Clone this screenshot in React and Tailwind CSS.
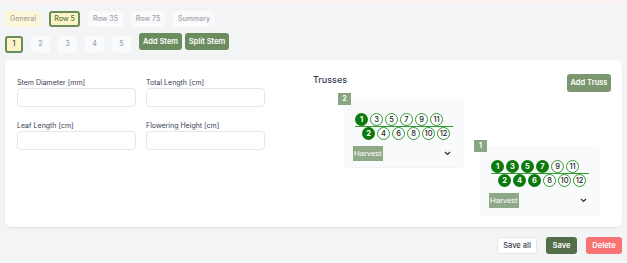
import React from "react";

const tabs = [
  { name: "General", w: "w-[36px]" },
  { name: "Row 5", w: "w-[31px]" },
  { name: "Row 35", w: "w-[35px]" },
  { name: "Row 75", w: "w-[34px]" },
  { name: "Summary", w: "w-[42px]" },
];
const stems = [1, 2, 3, 4, 5];

function Circle({ n, filled }) {
  return (
    <div
      className={
        "w-[13px] h-[13px] rounded-full flex items-center justify-center text-[7.5px] leading-none " +
        (filled
          ? "bg-[#0b7a0b] text-white font-bold"
          : "bg-white border border-[#2f9a2f] text-[#222] font-medium")
      }
    >
      {n}
    </div>
  );
}

function Truss({ id, filled }) {
  const top = [1, 3, 5, 7, 9, 11];
  const bottom = [2, 4, 6, 8, 10, 12];
  return (
    <div className="flex flex-col">
      <div className="relative z-10 w-[13px] h-[12px] bg-[#8aa582] text-white text-[7px] font-bold flex items-center justify-center">
        {id}
      </div>
      <div className="ml-[6px] -mt-[6px] w-[120px] h-[68px] bg-[#f9fafb] rounded-[5px] shadow-[0_1px_2px_rgba(0,0,0,0.06)] pt-[14px] pl-[11px]">
        <div className="flex gap-[2px]">
          {top.map((n) => (
            <Circle key={n} n={n} filled={filled.includes(n)} />
          ))}
        </div>
        <div className="w-[98px] h-px bg-[#2f9a2f]" />
        <div className="flex gap-[2px] ml-[7px]">
          {bottom.map((n) => (
            <Circle key={n} n={n} filled={filled.includes(n)} />
          ))}
        </div>
        <div className="mt-[6px] -ml-[2px] w-[100px] flex items-center justify-between">
          <span className="h-[15px] px-[1px] bg-[#8fa988] text-white text-[8px] flex items-center font-['Liberation_Sans',sans-serif]">
            Harvest
          </span>
          <svg width="7" height="5" viewBox="0 0 7 5" className="mr-[2px]">
            <path d="M1 1l2.5 2.5L6 1" fill="none" stroke="#333" strokeWidth="1.2" />
          </svg>
        </div>
      </div>
    </div>
  );
}

function Field({ label, unit }) {
  return (
    <div className="flex flex-col">
      <label className="text-[7px] leading-[10px] text-[#374151] h-[10px]">
        {label} <span>{unit}</span>
      </label>
      <input className="w-[119px] h-[19px] bg-white border border-[#e5e7eb] rounded-[4px]" />
    </div>
  );
}

export default function App() {
  return (
    <div className="min-h-screen bg-[#f3f4f6] px-[5px] font-['Inter',sans-serif]">
      <div className="h-[3px] bg-[#fdf0f0]" />

      {/* row tabs */}
      <div className="mt-[8px] flex gap-[8px]">
        {tabs.map((t, i) => (
          <div
            key={t.name}
            className={
              "h-[16px] rounded-[3px] flex items-center justify-center text-[7px] font-medium " +
              t.w +
              " " +
              (i === 0
                ? "bg-[#fdf7d9] text-[#a3a39b]"
                : i === 1
                ? "bg-[#fdf3c5] border-2 border-[#6b8a5e] text-[#55744b]"
                : "bg-[#fafafa] text-[#9ca3af]")
            }
          >
            {t.name}
          </div>
        ))}
      </div>

      {/* stems */}
      <div className="mt-[6px] flex items-start">
        <div className="flex gap-[8px] mt-[3px]">
          {stems.map((s) => (
            <div
              key={s}
              className={
                "h-[17px] rounded-[3px] flex items-center justify-center text-[7px] font-medium " +
                (s === 1
                  ? "w-[18px] bg-[#fdf3c5] border-2 border-[#6b8a5e] text-[#3f3f3f]"
                  : "w-[19px] bg-[#f9fafb] text-[#9ca3af]")
              }
            >
              {s}
            </div>
          ))}
        </div>
        <button className="ml-[8px] h-[17px] w-[43px] rounded-[3px] bg-[#6a8c5f] text-white text-[7.5px] font-semibold">
          Add Stem
        </button>
        <button className="ml-[3px] h-[17px] w-[44px] rounded-[3px] bg-[#6a8c5f] text-white text-[7.5px] font-semibold">
          Split Stem
        </button>
      </div>

      {/* main card */}
      <div className="mt-[7px] h-[167px] bg-white rounded-[6px] shadow-[0_1px_2px_rgba(0,0,0,0.08)] flex pl-[12px] pr-[11px] pt-[14px]">
        <div className="pt-[4px] grid grid-cols-[119px_119px] gap-x-[10px] gap-y-[14px] content-start">
          <Field label="Stem Diameter" unit="[mm]" />
          <Field label="Total Length" unit="[cm]" />
          <Field label="Leaf Length" unit="[cm]" />
          <Field label="Flowering Height" unit="[cm]" />
        </div>

        <div className="ml-[48px] flex-1 flex flex-col">
          <div className="flex justify-between items-start">
            <h2 className="mt-[1px] text-[9px] leading-[10px] font-medium text-[#374151]">Trusses</h2>
            <button className="h-[18px] w-[44px] rounded-[3px] bg-[#7a9770] text-white text-[7.5px] font-semibold">
              Add Truss
            </button>
          </div>
          <div className="mt-[1px] ml-[25px] flex items-start gap-[10px]">
            <Truss id={2} filled={[1, 2]} />
            <div className="mt-[47px]">
              <Truss id={1} filled={[1, 2, 3, 4, 5, 6, 7]} />
            </div>
          </div>
        </div>
      </div>

      {/* footer actions */}
      <div className="mt-[10px] flex justify-end gap-[9px]">
        <button className="h-[17px] w-[40px] rounded-[3px] bg-white border border-[#e5e7eb] text-[#374151] text-[7.5px] font-medium">
          Save all
        </button>
        <button className="h-[17px] w-[31px] rounded-[3px] bg-[#546e4c] text-white text-[7.5px] font-semibold">
          Save
        </button>
        <button className="h-[17px] w-[36px] rounded-[3px] bg-[#f87373] text-white text-[7.5px] font-semibold">
          Delete
        </button>
      </div>
    </div>
  );
}
